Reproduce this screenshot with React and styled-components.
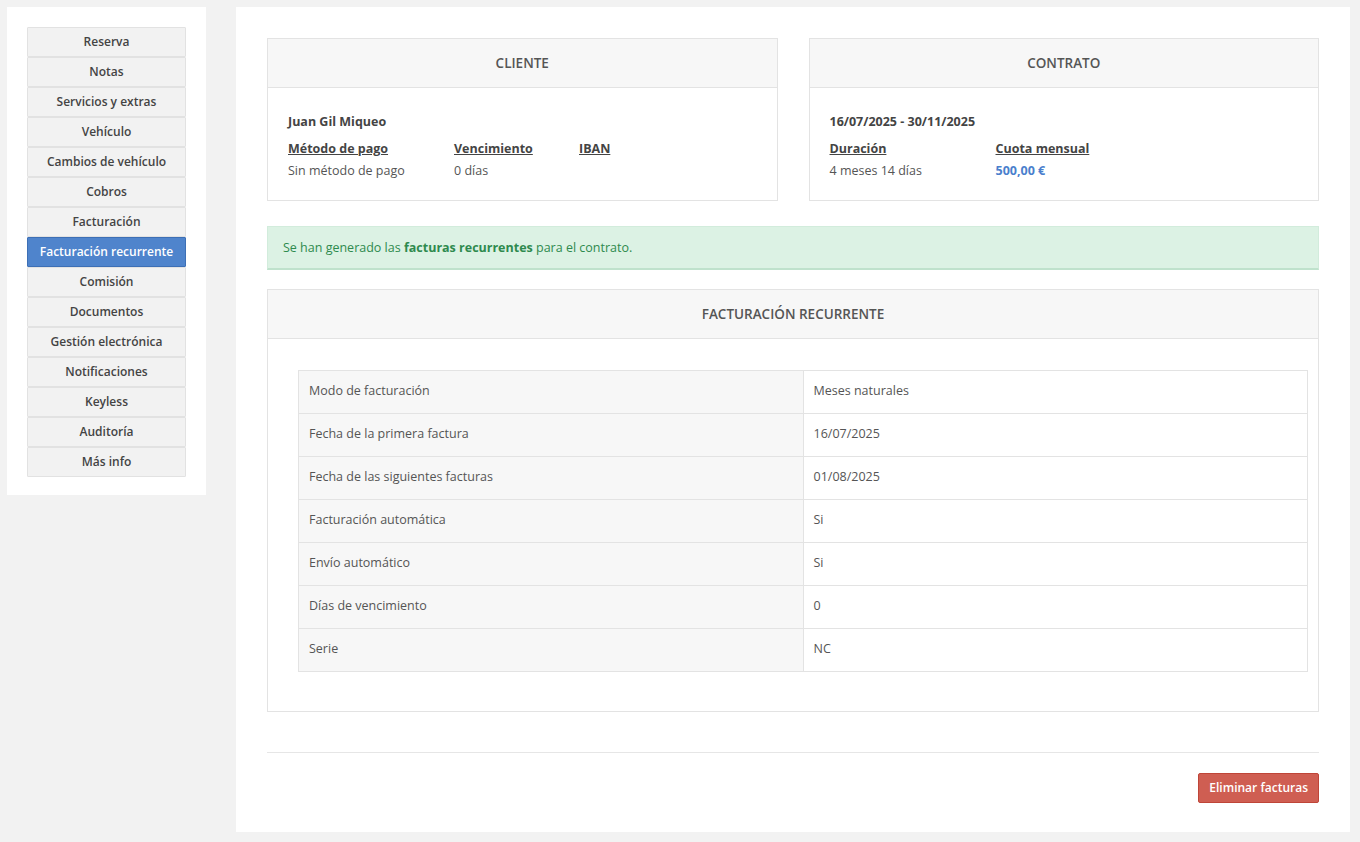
import React from 'react';
import styled, { createGlobalStyle } from 'styled-components';

const GlobalStyle = createGlobalStyle`
  html, body {
    margin: 0;
    padding: 0;
    background: #f2f2f2;
    font-family: 'Open Sans', 'Noto Sans', sans-serif;
    font-size: 13px;
    color: #555;
  }
  * { box-sizing: border-box; }
`;

const Page = styled.div`
  display: flex;
  align-items: flex-start;
  gap: 30px;
  padding: 7px 10px 10px 7px;
  min-height: 842px;
`;

const SidePanel = styled.nav`
  width: 199px;
  flex: none;
  background: #fff;
  padding: 20px 20px 18px 20px;
  display: flex;
  flex-direction: column;
`;

const NavItem = styled.a`
  display: flex;
  align-items: center;
  justify-content: center;
  height: 30px;
  padding-bottom: 1px;
  background: ${p => (p.$active ? '#4f84cc' : '#f2f2f2')};
  border: 1px solid ${p => (p.$active ? '#3d6fb5' : '#e2e2e2')};
  color: ${p => (p.$active ? '#fff' : '#444')};
  font-weight: 600;
  font-size: 12px;
  cursor: pointer;
  border-radius: 1px;
`;

const Main = styled.main`
  flex: 1;
  background: #fff;
  padding: 31px 31px 29px 31px;
  display: flex;
  flex-direction: column;
`;

const CardRow = styled.div`
  display: grid;
  grid-template-columns: 1fr 1fr;
  gap: 31px;
`;

const Card = styled.section`
  border: 1px solid #e3e3e3;
  background: #fff;
`;

const CardHeader = styled.header`
  height: 49px;
  background: #f7f7f7;
  border-bottom: 1px solid #e3e3e3;
  display: flex;
  align-items: center;
  justify-content: center;
  font-weight: 600;
  font-size: 13.5px;
  color: #555;
  text-transform: uppercase;
`;

const CardBody = styled.div`
  padding: 25px 20px 20px 20px;
`;

const Title = styled.div`
  font-weight: 700;
  color: #444;
  font-size: 12.5px;
  line-height: 18px;
  margin-bottom: 9px;
`;

const Fields = styled.div`
  display: flex;
`;

const Field = styled.div`
  width: ${p => p.$w}px;
  display: flex;
  flex-direction: column;
  gap: 4px;
`;

const Label = styled.span`
  font-weight: 700;
  text-decoration: underline;
  color: #444;
  font-size: 12.5px;
  line-height: 18px;
`;

const Value = styled.span`
  color: ${p => (p.$accent ? '#4a7fcd' : '#555')};
  font-weight: ${p => (p.$accent ? 700 : 400)};
  font-size: 12.5px;
  line-height: 18px;
  min-height: 18px;
`;

const Alert = styled.div`
  margin-top: 25px;
  background: #dcf2e4;
  border: 1px solid #d2ecdc;
  border-bottom: 2px solid #bfe2cc;
  color: #2e8a4e;
  padding: 12px 15px 11px 15px;
  font-size: 12.5px;
  line-height: 18px;
  strong { font-weight: 700; }
`;

const WideCard = styled(Card)`
  margin-top: 19px;
`;

const TableWrap = styled.div`
  padding: 31px 10px 39px 30px;
`;

const Table = styled.table`
  width: 100%;
  border-collapse: collapse;
  font-size: 12.5px;
`;

const Cell = styled.td`
  border: 1px solid #e3e3e3;
  height: 43px;
  padding: 0 10px 3px 10px;
  width: 50%;
  color: #555;
  background: ${p => (p.$head ? '#f7f7f7' : '#fff')};
`;

const Divider = styled.hr`
  margin: 40px 0 0 0;
  border: none;
  border-top: 1px solid #e6e6e6;
`;

const Actions = styled.div`
  display: flex;
  justify-content: flex-end;
  padding-top: 20px;
`;

const DangerButton = styled.button`
  height: 30px;
  padding: 0 10px 1px 10px;
  background: #cf5e52;
  border: 1px solid #bf4538;
  border-radius: 2px;
  color: #fff;
  font-family: inherit;
  font-weight: 600;
  font-size: 12px;
  cursor: pointer;
`;

const navItems = [
  'Reserva', 'Notas', 'Servicios y extras', 'Vehículo', 'Cambios de vehículo',
  'Cobros', 'Facturación', 'Facturación recurrente', 'Comisión', 'Documentos',
  'Gestión electrónica', 'Notificaciones', 'Keyless', 'Auditoría', 'Más info',
];

const rows = [
  ['Modo de facturación', 'Meses naturales'],
  ['Fecha de la primera factura', '16/07/2025'],
  ['Fecha de las siguientes facturas', '01/08/2025'],
  ['Facturación automática', 'Si'],
  ['Envío automático', 'Si'],
  ['Días de vencimiento', '0'],
  ['Serie', 'NC'],
];

export default function App() {
  return (
    <>
      <GlobalStyle />
      <Page>
        <SidePanel>
          {navItems.map(item => (
            <NavItem key={item} $active={item === 'Facturación recurrente'}>
              {item}
            </NavItem>
          ))}
        </SidePanel>
        <Main>
          <CardRow>
            <Card>
              <CardHeader>Cliente</CardHeader>
              <CardBody>
                <Title>Juan Gil Miqueo</Title>
                <Fields>
                  <Field $w={166}>
                    <Label>Método de pago</Label>
                    <Value>Sin método de pago</Value>
                  </Field>
                  <Field $w={125}>
                    <Label>Vencimiento</Label>
                    <Value>0 días</Value>
                  </Field>
                  <Field $w={100}>
                    <Label>IBAN</Label>
                    <Value />
                  </Field>
                </Fields>
              </CardBody>
            </Card>
            <Card>
              <CardHeader>Contrato</CardHeader>
              <CardBody>
                <Title>16/07/2025 - 30/11/2025</Title>
                <Fields>
                  <Field $w={166}>
                    <Label>Duración</Label>
                    <Value>4 meses 14 días</Value>
                  </Field>
                  <Field $w={140}>
                    <Label>Cuota mensual</Label>
                    <Value $accent>500,00 €</Value>
                  </Field>
                </Fields>
              </CardBody>
            </Card>
          </CardRow>

          <Alert>
            Se han generado las <strong>facturas recurrentes</strong> para el contrato.
          </Alert>

          <WideCard>
            <CardHeader>Facturación recurrente</CardHeader>
            <TableWrap>
              <Table>
                <tbody>
                  {rows.map(([k, v]) => (
                    <tr key={k}>
                      <Cell $head>{k}</Cell>
                      <Cell>{v}</Cell>
                    </tr>
                  ))}
                </tbody>
              </Table>
            </TableWrap>
          </WideCard>

          <Divider />
          <Actions>
            <DangerButton>Eliminar facturas</DangerButton>
          </Actions>
        </Main>
      </Page>
    </>
  );
}
